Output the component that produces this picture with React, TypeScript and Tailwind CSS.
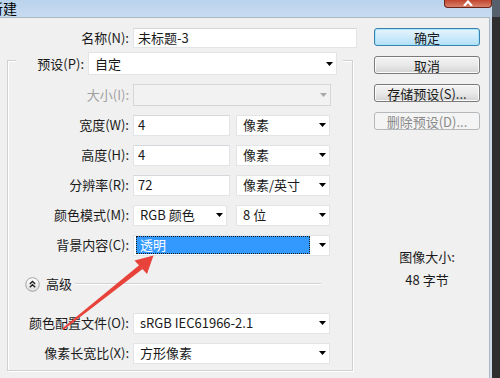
import React from 'react';

const Caret = ({ disabled = false }: { disabled?: boolean }) => (
  <svg width="7" height="4" viewBox="0 0 7 4" className="shrink-0">
    <path d="M0 0h7L3.5 4z" fill={disabled ? '#a8a8a8' : '#000'} />
  </svg>
);

const Select = ({
  value,
  className = '',
  disabled = false,
  selected = false,
}: {
  value?: string;
  className?: string;
  disabled?: boolean;
  selected?: boolean;
}) => (
  <div
    className={`flex items-center justify-between pr-[3px] border ${
      disabled ? 'bg-[#f2f2f2] border-[#d6d6d6]' : 'bg-white border-[#e2e4e7]'
    } ${className}`}
  >
    {selected ? (
      <span className="ml-[2px] flex h-[18px] w-[174px] items-center border border-dotted border-[#1b1b1b] bg-[#3399ff] pl-[3px] text-white">
        {value}
      </span>
    ) : (
      <span className="pl-[6px] whitespace-nowrap">{value}</span>
    )}
    <Caret disabled={disabled} />
  </div>
);

const Input = ({ value, className = '' }: { value: string; className?: string }) => (
  <div className={`flex items-center bg-white border border-[#e2e4e7] border-t-[#d4d7dc] pl-[4px] ${className}`}>
    {value}
  </div>
);

const Row = ({ label, children, disabled = false }: { label: string; children: React.ReactNode; disabled?: boolean }) => (
  <div className="flex h-[30px] items-center">
    <span className={`w-[121px] shrink-0 text-right whitespace-nowrap ${disabled ? 'text-[#a0a0a0]' : ''}`}>{label}</span>
    <div className="ml-[4px] flex items-center">{children}</div>
  </div>
);

const Button = ({ label, kind = 'normal' }: { label: string; kind?: 'default' | 'normal' | 'disabled' }) => {
  const style =
    kind === 'default'
      ? 'border-[#3c7fb1] bg-linear-to-b from-[#e6f5fd] to-[#b4e0f8] shadow-[inset_0_0_0_1px_#a6e6fb]'
      : kind === 'disabled'
      ? 'border-[#b5b9bc] bg-[#f4f4f4] text-[#8a8a8a]'
      : 'border-[#7a7a7a] bg-linear-to-b from-[#f3f3f3] via-[#e9e9e9] to-[#d3d3d3] shadow-[inset_0_0_0_1px_#fbfbfb]';
  return (
    <div className={`flex h-[18px] w-[106px] items-center justify-center rounded-[3px] border leading-none ${style}`}>
      {label}
    </div>
  );
};

export default function App() {
  return (
    <div className="relative h-[378px] w-[500px] overflow-hidden bg-[#f0f0f0] font-['Noto_Sans_CJK_SC','Noto_Sans',sans-serif] text-[13px] text-[#1a1a1a]">
      {/* title bar */}
      <div className="flex h-[17px] bg-linear-to-b from-[#b9d2ec] to-[#c8dcf1]">
        <span className="ml-[-11px] text-[14px] leading-[16px] text-black">新建</span>
        <div className="ml-auto flex h-[8px] w-[48px] justify-center rounded-b-[4px] border border-t-0 border-[#6b2418] bg-linear-to-b from-[#c0442f] to-[#d9806a]">
          <svg width="14" height="6" viewBox="0 0 14 6">
            <path d="M3 6L7 1.5L11 6" stroke="#fff" strokeWidth="2.2" fill="none" />
          </svg>
        </div>
        <div className="w-[8px] bg-[#56606c]" />
      </div>

      <div className="flex h-[361px]">
        <div className="flex w-[490px] border-t border-r border-[#a9b7c6]">
          {/* form */}
          <div className="flex w-[360px] flex-col">
            <div className="mt-[10px] flex h-[20px] items-center">
              <span className="w-[129px] text-right">名称(N):</span>
              <Input value="未标题-3" className="ml-[4px] h-[20px] w-[224px]" />
            </div>

            <div className="ml-[7px] mt-[12px] w-[346px] border border-[#d0d0d0] pb-[2px] shadow-[inset_1px_1px_0_#fff,1px_1px_0_#fff]">
              <div className="ml-[8px] mt-[-9px] flex h-[23px] w-[327px] items-center bg-[#f0f0f0]">
                <span className="w-[68px] text-right">预设(P):</span>
                <Select value="自定" className="ml-[4px] h-[23px] w-[249px]" />
              </div>
              <div className="mt-[5px]">
                <Row label="大小(I):" disabled>
                  <Select className="h-[22px] w-[198px]" disabled />
                </Row>
                <Row label="宽度(W):">
                  <Input value="4" className="h-[21px] w-[97px]" />
                  <Select value="像素" className="ml-[6px] h-[21px] w-[94px]" />
                </Row>
                <Row label="高度(H):">
                  <Input value="4" className="h-[21px] w-[97px]" />
                  <Select value="像素" className="ml-[6px] h-[21px] w-[94px]" />
                </Row>
                <Row label="分辨率(R):">
                  <Input value="72" className="h-[21px] w-[97px]" />
                  <Select value="像素/英寸" className="ml-[6px] h-[21px] w-[94px]" />
                </Row>
                <Row label="颜色模式(M):">
                  <Select value="RGB 颜色" className="h-[21px] w-[94px]" />
                  <Select value="8 位" className="ml-[9px] h-[21px] w-[94px]" />
                </Row>
                <Row label="背景内容(C):">
                  <Select value="透明" className="h-[21px] w-[197px]" selected />
                </Row>

                <div className="flex h-[48px] items-center">
                  <svg width="15" height="15" viewBox="0 0 15 15" className="ml-[17px]">
                    <defs>
                      <linearGradient id="adv" x1="0" y1="0" x2="0" y2="1">
                        <stop offset="0" stopColor="#ffffff" />
                        <stop offset="1" stopColor="#dedede" />
                      </linearGradient>
                    </defs>
                    <circle cx="7.5" cy="7.5" r="6.8" fill="url(#adv)" stroke="#a3a3a3" strokeWidth="1" />
                    <path d="M4.8 7L7.5 4.5L10.2 7M4.8 10.2L7.5 7.7L10.2 10.2" stroke="#1e1e1e" strokeWidth="1.3" fill="none" />
                  </svg>
                  <span className="ml-[6px]">高级</span>
                  <div className="ml-[3px] h-[2px] w-[246px] border-t border-[#d2d2d2] border-b border-b-white" />
                </div>

                <Row label="颜色配置文件(O):">
                  <Select value="sRGB IEC61966-2.1" className="h-[21px] w-[197px]" />
                </Row>
                <Row label="像素长宽比(X):">
                  <Select value="方形像素" className="h-[21px] w-[197px]" />
                </Row>
              </div>
            </div>
          </div>

          {/* buttons */}
          <div className="flex flex-col pl-[14px] pt-[10px]">
            <div className="flex flex-col gap-[10px]">
              <Button label="确定" kind="default" />
              <Button label="取消" />
              <Button label="存储预设(S)..." />
              <Button label="删除预设(D)..." kind="disabled" />
            </div>
            <div className="mt-[117px] w-[106px] text-center leading-[20px]">
              <div>图像大小:</div>
              <div className="mt-[3px]">48 字节</div>
            </div>
          </div>
        </div>
        <div className="w-[2px] bg-[#cfdae6]" />
        <div className="flex-1 bg-[#2e2e2e]" />
      </div>

      {/* red annotation arrow */}
      <svg className="pointer-events-none absolute left-0 top-0" width="500" height="378" viewBox="0 0 500 378">
        <path d="M63.6 329.8L62.4 328.2L139.4 265.1L142.6 268.9Z" fill="#e8433b" />
        <path d="M153.5 255.5L134.5 260.5L147 274Z" fill="#e8433b" />
      </svg>
    </div>
  );
}
